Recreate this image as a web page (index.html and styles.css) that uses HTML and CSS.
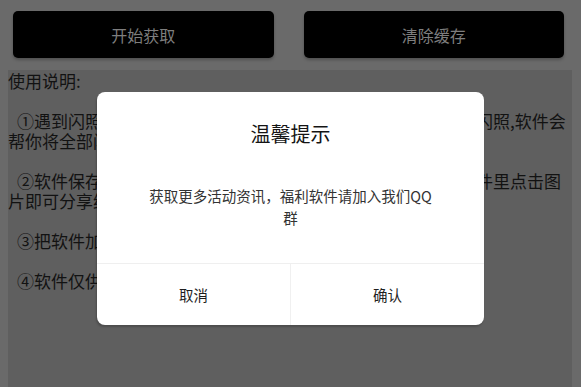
FILE: index.html
```html
<!DOCTYPE html>
<html lang="zh-CN">
<head>
<meta charset="utf-8">
<title>闪照获取</title>
<link rel="stylesheet" href="styles.css">
</head>
<body>
<div class="page">
  <div class="actions">
    <button class="btn">开始获取</button>
    <button class="btn">清除缓存</button>
  </div>
  <div class="panel">
    <p class="head">使用说明:</p>
    <p class="item">①遇到闪照先别点开，打开本软件点击开始获取之后再去查看闪照,软件会帮你将全部闪照保存到手机相册里。</p>
    <p class="item">②软件保存的闪照都会存放在手机相册中，也可以直接打开软件里点击图片即可分享给好友。</p>
    <p class="item">③把软件加入手机白名单，防止后台被清理。</p>
    <p class="item">④软件仅供学习交流使用，请勿用于非法用途。</p>
  </div>
  <div class="dialog">
    <div class="dialog-body">
      <h2 class="dialog-title">温馨提示</h2>
      <p class="dialog-msg">获取更多活动资讯，福利软件请加入我们QQ群</p>
    </div>
    <div class="dialog-foot">
      <button class="dlg-btn">取消</button>
      <button class="dlg-btn">确认</button>
    </div>
  </div>
</div>
</body>
</html>
```
FILE: styles.css
```css
* { box-sizing: border-box; }
html, body {
  margin: 0;
  padding: 0;
  width: 581px;
  height: 387px;
  overflow: hidden;
  background: #6a6a6a;
  font-family: "Noto Sans CJK SC", "Noto Sans", sans-serif;
}
.page {
  position: relative;
  width: 581px;
  height: 387px;
  display: flex;
  flex-direction: column;
}
.actions {
  display: flex;
  gap: 30px;
  padding: 11px 17px 12px 13px;
}
.btn {
  flex: 1;
  height: 47px;
  border: none;
  border-radius: 5px;
  background: #000;
  color: #7e7e7e;
  font-family: inherit;
  font-size: 16px;
  box-shadow: 0 2px 3px rgba(0,0,0,0.25);
}
.panel {
  flex: 1;
  margin: 0 9px 0 8px;
  padding-top: 1px;
  background: #5f5f5f;
  color: #121212;
  font-size: 17px;
  line-height: 20px;
}
.panel p { margin: 0 0 20px 0; }
.panel .item { text-indent: 9px; }
.dialog {
  position: absolute;
  left: 97px;
  top: 92px;
  width: 387px;
  height: 233px;
  background: #fff;
  border-radius: 8px;
  display: flex;
  flex-direction: column;
  box-shadow: -1px 2px 2px rgba(0,0,0,0.2);
}
.dialog-body {
  height: 171px;
  padding: 28px 49px 0;
  text-align: center;
}
.dialog-title {
  margin: 0;
  font-size: 20px;
  line-height: 28px;
  font-weight: normal;
  color: #141414;
}
.dialog-msg {
  margin: 37px 0 0;
  font-size: 14.5px;
  line-height: 22px;
  color: #333;
}
.dialog-foot {
  flex: 1;
  display: flex;
  border-top: 1px solid #efefef;
}
.dlg-btn {
  flex: 1;
  border: none;
  background: transparent;
  font-family: inherit;
  font-size: 14.5px;
  color: #1e1e1e;
  padding: 0;
}
.dlg-btn + .dlg-btn { border-left: 1px solid #f0f0f0; }
```
